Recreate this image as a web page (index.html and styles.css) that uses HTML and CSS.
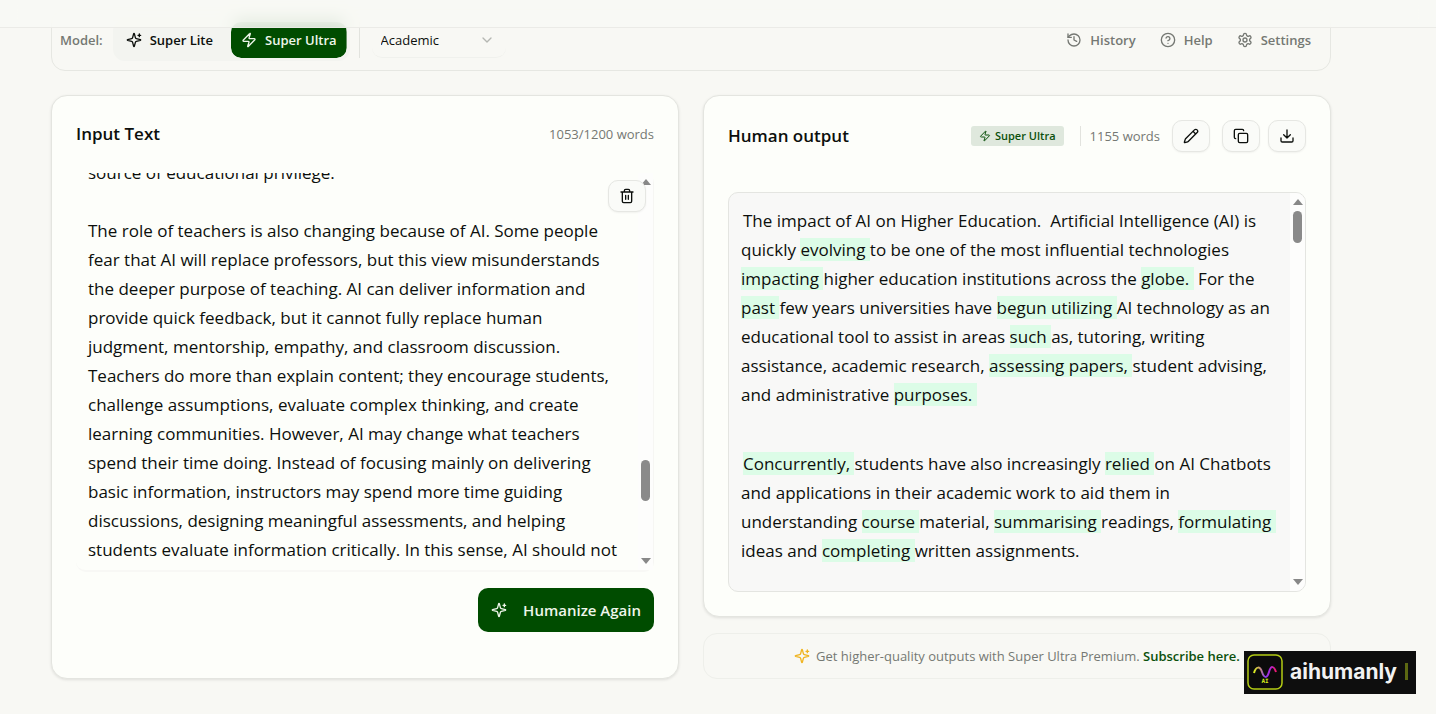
FILE: index.html
```html
<!DOCTYPE html>
<html lang="en">
    <head>
        <meta charset="UTF-8">
        <meta name="viewport" content="width=device-width, initial-scale=1.0">
        <title>aihumanly</title>
        <link rel="stylesheet" href="styles.css">
    </head>
    <body>
        <header class="topbar"></header>
        <main class="page">
            <div class="toolbar">
                <span class="toolbarLabel">Model:</span>
                <div class="modelSwitch">
                    <button type="button" class="modelBtn">
                        <svg class="icon" viewBox="0 0 24 24" width="16" height="16"><path d="M9.937 15.5A2 2 0 0 0 8.5 14.063l-6.135-1.582a.5.5 0 0 1 0-.962L8.5 9.936A2 2 0 0 0 9.937 8.5l1.582-6.135a.5.5 0 0 1 .963 0L14.063 8.5A2 2 0 0 0 15.5 9.937l6.135 1.581a.5.5 0 0 1 0 .964L15.5 14.063a2 2 0 0 0-1.437 1.437l-1.582 6.135a.5.5 0 0 1-.963 0z"/><path d="M20 3v4M22 5h-4"/></svg>
                        Super Lite
                    </button>
                    <button type="button" class="modelBtn active">
                        <svg class="icon" viewBox="0 0 24 24" width="16" height="16"><path d="M4 14a1 1 0 0 1-.78-1.63l9.9-10.2a.5.5 0 0 1 .86.46l-1.92 6.02A1 1 0 0 0 13 10h7a1 1 0 0 1 .78 1.63l-9.9 10.2a.5.5 0 0 1-.86-.46l1.92-6.02A1 1 0 0 0 11 14z"/></svg>
                        Super Ultra
                    </button>
                </div>
                <div class="selectBox">
                    <select class="toneSelect" aria-label="Writing style">
                        <option>Academic</option>
                    </select>
                    <svg class="icon chevron" viewBox="0 0 24 24" width="16" height="16"><path d="m6 9 6 6 6-6"/></svg>
                </div>
                <nav class="links">
                    <a href="#">
                        <svg class="icon" viewBox="0 0 24 24" width="16" height="16"><path d="M3 12a9 9 0 1 0 9-9 9.75 9.75 0 0 0-6.74 2.74L3 8"/><path d="M3 3v5h5M12 7v5l4 2"/></svg>
                        History
                    </a>
                    <a href="#">
                        <svg class="icon" viewBox="0 0 24 24" width="16" height="16"><circle cx="12" cy="12" r="10"/><path d="M9.09 9a3 3 0 0 1 5.83 1c0 2-3 3-3 3M12 17h.01"/></svg>
                        Help
                    </a>
                    <a href="#">
                        <svg class="icon" viewBox="0 0 24 24" width="16" height="16"><path d="M12.22 2h-.44a2 2 0 0 0-2 2v.18a2 2 0 0 1-1 1.73l-.43.25a2 2 0 0 1-2 0l-.15-.08a2 2 0 0 0-2.73.73l-.22.38a2 2 0 0 0 .73 2.73l.15.1a2 2 0 0 1 1 1.72v.51a2 2 0 0 1-1 1.74l-.15.09a2 2 0 0 0-.73 2.73l.22.38a2 2 0 0 0 2.73.73l.15-.08a2 2 0 0 1 2 0l.43.25a2 2 0 0 1 1 1.73V20a2 2 0 0 0 2 2h.44a2 2 0 0 0 2-2v-.18a2 2 0 0 1 1-1.73l.43-.25a2 2 0 0 1 2 0l.15.08a2 2 0 0 0 2.73-.73l.22-.39a2 2 0 0 0-.73-2.73l-.15-.08a2 2 0 0 1-1-1.74v-.5a2 2 0 0 1 1-1.74l.15-.09a2 2 0 0 0 .73-2.73l-.22-.38a2 2 0 0 0-2.73-.73l-.15.08a2 2 0 0 1-2 0l-.43-.25a2 2 0 0 1-1-1.73V4a2 2 0 0 0-2-2z"/><circle cx="12" cy="12" r="3"/></svg>
                        Settings
                    </a>
                </nav>
            </div>

            <div class="columns">
                <section class="card inputCard">
                    <div class="cardHead">
                        <h2><label for="inputText">Input Text</label></h2>
                        <span class="count">1053/1200 words</span>
                    </div>
                    <div class="inputWrap">
                        <textarea id="inputText" wrap="off">source of educational privilege.

The role of teachers is also changing because of AI. Some people
fear that AI will replace professors, but this view misunderstands
the deeper purpose of teaching. AI can deliver information and
provide quick feedback, but it cannot fully replace human
judgment, mentorship, empathy, and classroom discussion.
Teachers do more than explain content; they encourage students,
challenge assumptions, evaluate complex thinking, and create
learning communities. However, AI may change what teachers
spend their time doing. Instead of focusing mainly on delivering
basic information, instructors may spend more time guiding
discussions, designing meaningful assessments, and helping
students evaluate information critically. In this sense, AI should not</textarea>
                        <div class="scrollbar" aria-hidden="true">
                            <span class="arrowUp"></span>
                            <span class="thumb thumbLow"></span>
                            <span class="arrowDown"></span>
                        </div>
                        <button type="button" class="iconBtn clearBtn" aria-label="Clear text">
                            <svg class="icon" viewBox="0 0 24 24" width="16" height="16"><path d="M3 6h18M19 6v14a2 2 0 0 1-2 2H7a2 2 0 0 1-2-2V6M8 6V4a2 2 0 0 1 2-2h4a2 2 0 0 1 2 2v2M10 11v6M14 11v6"/></svg>
                        </button>
                    </div>
                    <button type="button" class="humanizeBtn">
                        <svg class="icon" viewBox="0 0 24 24" width="16" height="16"><path d="M9.937 15.5A2 2 0 0 0 8.5 14.063l-6.135-1.582a.5.5 0 0 1 0-.962L8.5 9.936A2 2 0 0 0 9.937 8.5l1.582-6.135a.5.5 0 0 1 .963 0L14.063 8.5A2 2 0 0 0 15.5 9.937l6.135 1.581a.5.5 0 0 1 0 .964L15.5 14.063a2 2 0 0 0-1.437 1.437l-1.582 6.135a.5.5 0 0 1-.963 0z"/><path d="M20 3v4M22 5h-4"/></svg>
                        Humanize Again
                    </button>
                </section>

                <div class="outputCol">
                    <section class="card outputCard">
                        <div class="cardHead">
                            <h2>Human output</h2>
                            <div class="outputTools">
                                <span class="badge">
                                    <svg class="icon" viewBox="0 0 24 24" width="12" height="12"><path d="M4 14a1 1 0 0 1-.78-1.63l9.9-10.2a.5.5 0 0 1 .86.46l-1.92 6.02A1 1 0 0 0 13 10h7a1 1 0 0 1 .78 1.63l-9.9 10.2a.5.5 0 0 1-.86-.46l1.92-6.02A1 1 0 0 0 11 14z"/></svg>
                                    Super Ultra
                                </span>
                                <span class="count outputCount">1155 words</span>
                                <button type="button" class="iconBtn editBtn" aria-label="Edit">
                                    <svg class="icon" viewBox="0 0 24 24" width="16" height="16"><path d="M21.174 6.812a1 1 0 0 0-3.986-3.987L3.842 16.174a2 2 0 0 0-.5.83l-1.321 4.352a.5.5 0 0 0 .623.622l4.353-1.32a2 2 0 0 0 .83-.497zM15 5l4 4"/></svg>
                                </button>
                                <button type="button" class="iconBtn" aria-label="Copy">
                                    <svg class="icon" viewBox="0 0 24 24" width="16" height="16"><rect x="8" y="8" width="14" height="14" rx="2"/><path d="M4 16c-1.100 0-2-.9-2-2V4c0-1.100.9-2 2-2h10c1.100 0 2 .9 2 2"/></svg>
                                </button>
                                <button type="button" class="iconBtn" aria-label="Download">
                                    <svg class="icon" viewBox="0 0 24 24" width="16" height="16"><path d="M21 15v4a2 2 0 0 1-2 2H5a2 2 0 0 1-2-2v-4M7 10l5 5 5-5M12 15V3"/></svg>
                                </button>
                            </div>
                        </div>
                        <div class="output">
                            <div class="outputText">
                                <p>The impact of AI on Higher Education.&nbsp; Artificial Intelligence (AI) is<br>
                                quickly <mark>evolving </mark>to be one of the most influential technologies<br>
                                <mark>impacting </mark>higher education institutions across the <mark>globe.&nbsp;</mark> For the<br>
                                <mark>past </mark>few years universities have <mark>begun utilizing </mark>AI technology as an<br>
                                educational tool to assist in areas <mark>such </mark>as, tutoring, writing<br>
                                assistance, academic research, <mark>assessing papers, </mark>student advising,<br>
                                and administrative <mark>purposes.&nbsp;</mark></p>
                                <p><mark>Concurrently, </mark>students have also increasingly <mark>relied </mark>on AI Chatbots<br>
                                and applications in their academic work to aid them in<br>
                                understanding <mark>course </mark>material, <mark>summarising </mark>readings, <mark>formulating&nbsp;</mark><br>
                                ideas and <mark>completing </mark>written assignments.</p>
                            </div>
                            <div class="scrollbar" aria-hidden="true">
                                <span class="arrowUp"></span>
                                <span class="thumb"></span>
                                <span class="arrowDown"></span>
                            </div>
                        </div>
                    </section>
                    <div class="promo">
                        <svg class="icon promoIcon" viewBox="0 0 24 24" width="16" height="16"><path d="M9.937 15.5A2 2 0 0 0 8.5 14.063l-6.135-1.582a.5.5 0 0 1 0-.962L8.5 9.936A2 2 0 0 0 9.937 8.5l1.582-6.135a.5.5 0 0 1 .963 0L14.063 8.5A2 2 0 0 0 15.5 9.937l6.135 1.581a.5.5 0 0 1 0 .964L15.5 14.063a2 2 0 0 0-1.437 1.437l-1.582 6.135a.5.5 0 0 1-.963 0z"/><path d="M20 3v4M22 5h-4"/></svg>
                        <span>Get higher-quality outputs with Super Ultra Premium. <a href="#">Subscribe here.</a></span>
                    </div>
                </div>
            </div>
        </main>

        <div class="brand">
            <svg viewBox="0 0 36 36" width="36" height="36">
                <defs>
                    <linearGradient id="wave" x1="0" x2="1" y1="0" y2="0">
                        <stop offset="0" stop-color="#d8f01c"/>
                        <stop offset=".25" stop-color="#c99a6a"/>
                        <stop offset=".5" stop-color="#8a3cf0"/>
                        <stop offset=".75" stop-color="#b026d8"/>
                        <stop offset="1" stop-color="#f0186a"/>
                    </linearGradient>
                </defs>
                <rect x="1" y="1" width="34" height="34" rx="6" fill="#0b0b0b" stroke="#b4cc14" stroke-width="1.500"/>
                <path d="M7 19c2-7 6-7 8-1s5 7 7 0 5-6 7 0" fill="none" stroke="url(#wave)" stroke-width="2"/>
                <text class="brandAi" x="18" y="29" text-anchor="middle">AI</text>
            </svg>
            <span class="brandName">aihumanly</span>
            <span class="cursor"></span>
        </div>
        <script>
            // open the editor a little way down the text
            document.getElementById("inputText").scrollTop = 27;
        </script>
    </body>
</html>
```
FILE: styles.css
```css
* {
    box-sizing: border-box;
}
body {
    margin: 0;
    background-color: #f8f8f4;
    color: #0c0f0c;
    font-family: "Open Sans", "Noto Sans", sans-serif;
    font-size: 13px;
    line-height: 20px;
}
button, select, textarea {
    font: inherit;
    color: inherit;
}
h2, p {
    margin: 0;
}
.icon {
    fill: none;
    stroke: currentColor;
    stroke-width: 2;
    stroke-linecap: round;
    stroke-linejoin: round;
    flex: none;
}
.topbar {
    position: fixed;
    top: 0;
    left: 0;
    right: 0;
    height: 28px;
    z-index: 5;
    background-color: rgba(248, 249, 245, 0.85);
    backdrop-filter: blur(8px);
    border-bottom: 1px solid #ebebe7;
}
.page {
    padding: 9px 105px 24px 51px;
}

.toolbar {
    display: flex;
    align-items: center;
    height: 62px;
    padding: 0 19px 0 8px;
    border: 1px solid #e6e7e2;
    border-radius: 14px;
    font-weight: 600;
}
.toolbarLabel {
    color: #757873;
}
.modelSwitch {
    display: flex;
    margin-left: 10px;
    padding: 3px;
    border-radius: 12px;
    background-color: #f3f4f0;
}
.modelBtn {
    display: flex;
    align-items: center;
    gap: 8px;
    height: 36px;
    padding: 0 10px;
    border: 0;
    border-radius: 10px;
    background: none;
    font-weight: 600;
    cursor: pointer;
}
.modelBtn.active {
    margin-left: 8px;
    background-color: #004c00;
    color: #eef6ea;
    box-shadow: 0 -2px 8px rgba(0, 76, 0, 0.15);
    clip-path: inset(-16px 0 0 0 round 10px);
}
.selectBox {
    position: relative;
    margin-left: 9px;
    padding-left: 12px;
    border-left: 1px solid #e2e3de;
}
.toneSelect {
    appearance: none;
    width: 134px;
    height: 36px;
    padding: 0 9px;
    border: 0;
    border-bottom: 1px solid #f0f1ed;
    border-radius: 10px;
    background: none;
    font-weight: 400;
}
.chevron {
    position: absolute;
    right: 11px;
    top: 10px;
    color: #b5b7b2;
    pointer-events: none;
}
.links {
    display: flex;
    gap: 24px;
    margin-left: auto;
}
.links a {
    display: flex;
    align-items: center;
    gap: 8px;
    color: #757873;
    text-decoration: none;
}

.columns {
    display: grid;
    grid-template-columns: 1fr 1fr;
    gap: 24px;
    margin-top: 24px;
}
.card {
    padding: 24px;
    border: 1px solid #e4e5e0;
    border-radius: 16px;
    background-color: #fdfefa;
    box-shadow: 0 1px 3px rgba(0, 0, 0, 0.1);
}
.cardHead {
    display: flex;
    align-items: center;
    justify-content: space-between;
}
.cardHead h2 {
    font-size: 17px;
    font-weight: 600;
    line-height: 28px;
}
.count {
    color: #757873;
}

.inputCard {
    display: flex;
    flex-direction: column;
    padding-bottom: 46px;
}
.inputCard .cardHead {
    height: 28px;
}
.inputWrap {
    position: relative;
    display: flex;
    margin-top: 25px;
    border-right: 1px solid #f6f6f3;
    border-bottom: 2px solid #f8f8f5;
    border-radius: 10px;
}
textarea {
    display: block;
    flex: 1;
    min-width: 0;
    height: 397px;
    padding: 12px;
    border: 0;
    outline: 0;
    resize: none;
    overflow: hidden;
    background: none;
    font-size: 17px;
    line-height: 29px;
}
.scrollbar {
    display: flex;
    flex-direction: column;
    align-items: center;
    width: 15px;
    padding: 6px 0;
    background-color: #fdfdfc;
}
.arrowUp, .arrowDown {
    border: 5px solid transparent;
}
.arrowUp {
    border-top: 0;
    border-bottom: 6px solid #888;
}
.arrowDown {
    margin-top: auto;
    border-bottom: 0;
    border-top: 6px solid #888;
}
.thumb {
    width: 9px;
    height: 32px;
    margin-top: 6px;
    border-radius: 5px;
    background-color: #8a8a8a;
}
.thumbLow {
    height: 41px;
    margin-top: 275px;
}
.iconBtn {
    display: flex;
    align-items: center;
    justify-content: center;
    width: 38px;
    height: 32px;
    padding: 0;
    border: 1px solid #e6e7e3;
    border-radius: 10px;
    background-color: #fafbf8;
    box-shadow: 0 1px 2px rgba(0, 0, 0, 0.05);
    cursor: pointer;
}
.clearBtn {
    position: absolute;
    top: 7px;
    right: 7px;
}
.humanizeBtn {
    display: flex;
    align-items: center;
    align-self: flex-end;
    gap: 16px;
    height: 44px;
    margin-top: 16px;
    padding: 0 13px;
    border: 0;
    border-radius: 10px;
    background-color: #004c00;
    color: #eef6ea;
    font-size: 15px;
    font-weight: 600;
    cursor: pointer;
}

.outputCol {
    display: flex;
    flex-direction: column;
    gap: 16px;
}
.outputTools {
    display: flex;
    align-items: center;
}
.badge {
    display: flex;
    align-items: center;
    gap: 4px;
    height: 20px;
    padding: 0 8px;
    border-radius: 3px;
    background-color: #dfe8dd;
    color: #0b500b;
    font-size: 11px;
    font-weight: 600;
}
.outputCount {
    margin-left: 16px;
    padding-left: 9px;
    border-left: 1px solid #e2e3de;
}
.outputTools .iconBtn {
    margin-left: 8px;
}
.outputTools .editBtn {
    margin: 0 4px 0 12px;
}
.output {
    display: flex;
    height: 400px;
    margin-top: 40px;
    border: 1px solid #e4e5e1;
    border-radius: 10px;
    background-color: #f8f8f7;
    overflow: hidden;
}
.outputText {
    flex: 1;
    min-width: 0;
    padding: 13px 12px;
    font-size: 17px;
    line-height: 29px;
    white-space: nowrap;
}
.outputText p {
    text-indent: 2px;
}
.outputText p + p {
    margin-top: 40px;
}
mark {
    color: inherit;
    background-color: #dcfce7;
}
.promo {
    display: flex;
    align-items: center;
    justify-content: center;
    gap: 6px;
    height: 46px;
    border: 1px solid #eeefea;
    border-radius: 14px;
    color: #757873;
}
.promoIcon {
    color: #f0b420;
}
.promo a {
    color: #0b500b;
    font-weight: 600;
    text-decoration: none;
}

.brand {
    position: fixed;
    right: 20px;
    bottom: 20px;
    display: flex;
    align-items: center;
    width: 172px;
    height: 43px;
    padding: 0 8px 2px 3px;
    background-color: #0e0e0e;
    color: #f2f2f2;
}
.brandName {
    margin-left: 7px;
    font-family: Inter, sans-serif;
    font-size: 21px;
    font-weight: 700;
}
.brandAi {
    fill: #d8f01c;
    font: bold 6px "DejaVu Sans Mono", monospace;
}
.cursor {
    width: 3px;
    height: 17px;
    margin-left: auto;
    background-color: #5c6812;
}
```
